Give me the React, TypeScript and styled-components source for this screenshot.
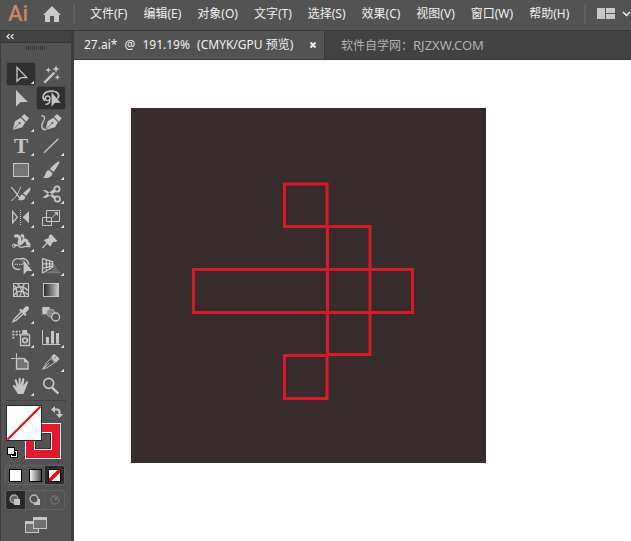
import React from "react";
import styled, { createGlobalStyle } from "styled-components";

const GlobalStyle = createGlobalStyle`
  * { box-sizing: border-box; }
  body { margin: 0; background: #fff; }
  button { font: inherit; color: inherit; margin: 0; padding: 0; border: 0; background: none; }
  svg { display: block; }
`;

const ink = "#c6c6c6";

const Shell = styled.div`
  display: flex;
  flex-direction: column;
  height: 100vh;
  overflow: hidden;
  color: #f0f0f0;
  font: 12px/18px "Noto Sans", "Noto Sans CJK SC", sans-serif;
`;

const MenuBar = styled.header`
  display: flex;
  align-items: center;
  flex: none;
  height: 31px;
  padding: 0 0 3px 8px;
  overflow: hidden;
  background: #535353;
  border-bottom: 1px solid #393939;
`;

const Logo = styled.span`
  width: 35px;
  flex: none;
  color: #c58761;
  font: 500 22px/26px Roboto, sans-serif;
`;

const HomeButton = styled.button`
  width: 18px;
  margin-right: 12px;
  flex: none;
`;

const Separator = styled.span`
  width: 2px;
  height: 20px;
  flex: none;
  background: #606060;
`;

const Menus = styled.nav`
  display: flex;
  gap: 16px;
  flex: none;
  margin: 0 15px;
`;

const MenuButton = styled.button`
  white-space: nowrap;
`;

const LayoutButton = styled.button`
  display: flex;
  align-items: center;
  gap: 7px;
  flex: none;
  margin-left: 11px;
`;

const Workspace = styled.div`
  display: flex;
  flex: 1;
  min-height: 0;
`;

const ToolPanel = styled.aside`
  display: flex;
  flex-direction: column;
  flex: none;
  width: 74px;
  background: #535353;
  border-left: 1px solid #3d3d3d;
  border-right: 3px solid #3d3d3d;
`;

const PanelHeader = styled.button`
  display: flex;
  align-items: center;
  height: 12px;
  padding-left: 5px;
  flex: none;
  background: #424242;
  border-bottom: 1px solid #383838;
`;

const Grip = styled.div`
  width: 20px;
  height: 4px;
  margin: 3px 0 13px 25px;
  flex: none;
  background: repeating-linear-gradient(90deg, #393939 0 1px, #535353 1px 2px);
`;

const ToolGrid = styled.div`
  display: grid;
  grid-template-columns: 28px 28px;
  grid-auto-rows: 22px;
  gap: 2px;
  padding: 0 6px 3px;
`;

const ToolButton = styled.button<{ $active?: boolean }>`
  border-radius: 2px;
  background: ${(p) => (p.$active ? "#303030" : "transparent")};
  box-shadow: ${(p) => (p.$active ? "0 0 0 1px #484848" : "none")};
`;

const Divider = styled.hr`
  width: 60px;
  height: 1px;
  margin: 0 0 4px 5px;
  border: 0;
  flex: none;
  background: #444;
`;

const Swatches = styled.div`
  position: relative;
  height: 54px;
  margin: 0 8px 6px 5px;
  flex: none;
`;

const SwatchButton = styled.button<{ $x: number; $y: number }>`
  position: absolute;
  left: ${(p) => p.$x}px;
  top: ${(p) => p.$y}px;
`;

const ModeRow = styled.div`
  display: flex;
  flex: none;
  width: 60px;
  height: 20px;
  margin: 0 0 5px 4px;
  border: 1px solid #616161;
  border-radius: 3px;
  overflow: hidden;
`;

const ModeButton = styled.button<{ $active?: boolean }>`
  display: grid;
  place-items: center;
  flex: 1;
  background: ${(p) => (p.$active ? "#292929" : "transparent")};
  & + & { border-left: 1px solid #5d5d5d; }
`;

const ScreenButton = styled.button`
  width: 23px;
  margin: 2px 0 0 24px;
`;

const Document = styled.main`
  display: flex;
  flex-direction: column;
  flex: 1;
  min-width: 0;
`;

const TabBar = styled.div`
  display: flex;
  flex: none;
  height: 29px;
  background: #424242;
  border-bottom: 1px solid #383838;
`;

const Tab = styled.div`
  display: flex;
  align-items: center;
  flex: none;
  width: 251px;
  padding: 0 6px 0 10px;
  justify-content: space-between;
  background: #535353;
  border-right: 1px solid #383838;
  white-space: nowrap;
`;

const TabPart = styled.span`
  margin-left: 4px;
`;

const CloseButton = styled.button`
  width: 9px;
`;

const TabNote = styled.span`
  align-self: center;
  margin-left: 16px;
  color: #b0b0b0;
  white-space: nowrap;
`;

const SiteName = styled.span`
  font-size: 13px;
`;

const Canvas = styled.section`
  flex: 1;
  padding: 48px 57px;
  overflow: hidden;
  background: #fff;
`;

const line = (w = 4) => ({ fill: "none", stroke: ink, strokeWidth: w });

type Tool = { name: string; art: React.ReactNode; active?: boolean; more?: boolean };

const nib = (
  <>
    <path d="M17 57 24 31 41 20 55 34 46 49Z" fill={ink} />
    <path d="M43 17 52 9 66 22 58 32Z" fill={ink} />
    <path d="M19 55 37 37" stroke="#535353" strokeWidth="2" />
    <circle cx="38" cy="36" r="3" fill="#535353" />
  </>
);

const tools: Tool[] = [
  { name: "选择", active: true, more: true, art: <path d="M30 13V55L42 44H59Z" {...line()} /> },
  {
    name: "魔棒",
    art: (
      <>
        <path d="M22 59 52 29" {...line(7)} />
        <path d="M57 7 60 15 68 18 60 21 57 30 54 21 46 18 54 15ZM34 12 36 18 43 21 36 24 34 30 32 24 25 21 32 18ZM61 34 63 40 69 43 63 46 61 52 59 46 53 43 59 40Z" fill={ink} />
      </>
    ),
  },
  { name: "直接选择", art: <path d="M27 9V59L41 45H63Z" fill={ink} /> },
  {
    name: "套索",
    active: true,
    art: (
      <>
        <path d="M24 41C15 34 17 20 29 15C41 10 59 12 64 21C66 26 65 31 61 35" {...line(5)} />
        <circle cx="32" cy="34" r="7" {...line(4)} />
        <path d="M38 37C40 46 35 52 25 52" {...line(4)} />
        <path d="M43 14V60L54 48H72Z" fill={ink} stroke="#303030" strokeWidth="1" />
      </>
    ),
  },
  { name: "钢笔", more: true, art: nib },
  {
    name: "曲率",
    art: (
      <>
        <g transform="translate(8 0)">{nib}</g>
        <path d="M13 15C24 12 25 23 19 31C13 41 11 54 26 57" {...line()} />
      </>
    ),
  },
  {
    name: "文字",
    more: true,
    art: (
      <text x="42" y="54" textAnchor="middle" fill={ink} fontFamily="Liberation Serif, serif" fontWeight="700" fontSize="64">T</text>
    ),
  },
  { name: "直线段", more: true, art: <path d="M21 53 64 11" {...line()} /> },
  { name: "矩形", more: true, art: <rect x="19.5" y="13.5" width="45" height="39" fill="#747474" stroke={ink} strokeWidth="3" /> },
  {
    name: "画笔",
    more: true,
    art: (
      <path d="M67 7C70 10 57 30 49 39L39 30C47 20 62 7 67 7ZM36 33 46 42C46 55 33 59 18 56C28 50 23 36 36 33Z" fill={ink} />
    ),
  },
  {
    name: "Shaper",
    more: true,
    art: (
      <>
        <path d="M12 13C18 14 30 35 43 51" {...line()} />
        <path d="M41 11C36 27 27 46 12 53" {...line(3)} />
        <path d="M70 12V22L57 39 48 31ZM45 34 55 41C54 51 45 54 33 50C41 47 38 37 45 34Z" fill={ink} />
      </>
    ),
  },
  {
    name: "剪刀",
    more: true,
    art: (
      <>
        <circle cx="60" cy="18" r="8" {...line(5)} />
        <circle cx="61" cy="48" r="8" {...line(5)} />
        <path d="M17 21 27 22 58 41 52 48ZM16 44 27 45 57 26 50 19Z" fill={ink} />
      </>
    ),
  },
  {
    name: "镜像",
    more: true,
    art: (
      <>
        <path d="M17 14V47L31 30.500Z" {...line(4)} />
        <path d="M40.500 9V54" {...line(3)} strokeDasharray="3 3" />
        <path d="M66 12V49L47 30.500Z" fill={ink} />
      </>
    ),
  },
  {
    name: "比例缩放",
    more: true,
    art: (
      <>
        <path d="M28.500 10.500H67.500V43.500H28.500ZM16.500 31.500H43.500V55.500H16.500ZM46 31 60 18" {...line(3)} />
        <path d="M51 15H63V27Z" fill={ink} />
      </>
    ),
  },
  {
    name: "变形",
    more: true,
    art: (
      <>
        <path d="M22 16C35 11 42 21 37 31C34 40 40 42 46 33C52 25 60 26 60 33C61 39 64 41 70 39" {...line(9)} />
        <path d="M21 44C30 37 34 48 42 49C53 50 57 41 70 48M47 14C51 17 51 22 48 27" {...line(4)} />
        <circle cx="21" cy="44" r="5" {...line(3)} />
        <circle cx="46" cy="14" r="5" fill={ink} />
      </>
    ),
  },
  {
    name: "操控变形",
    more: true,
    art: (
      <>
        <path d="M42 9 61 29 55 33 48 32 40 47 20 27 35 21 36 14Z" fill={ink} />
        <path d="M16 51 34 32" {...line()} />
      </>
    ),
  },
  {
    name: "形状生成器",
    more: true,
    art: (
      <>
        <path d="M40 42C29 47 16 39 16 27C16 15 28 8 38 12C50 7 65 15 65 29" {...line(4)} />
        <path d="M38 12C48 15 51 22 49 29" {...line(3)} strokeDasharray="3 3" />
        <path d="M22 28H50" {...line(4)} strokeDasharray="4 3" />
        <path d="M50 16V59L60 48H76Z" fill={ink} />
      </>
    ),
  },
  {
    name: "透视网格",
    more: true,
    art: (
      <>
        <path d="M49 25 72 55H26L49 42Z" fill="#777" />
        <path d="M16.500 10V55M17 11 47 20V37M17 54 47 37M17 26 47 27M17 40 47 33M28 14V49M38 17V43" {...line(4)} />
        <path d="M42 40H64M32 47H69" stroke="#535353" strokeWidth="2" />
      </>
    ),
  },
  {
    name: "网格",
    art: (
      <>
        <rect x="19.500" y="13.500" width="45" height="39" {...line(3)} />
        <path d="M19 35C32 18 49 21 65 35M19 52C29 35 43 31 65 48M31 14C45 25 46 40 38 52M52 14C42 27 49 41 54 52M19 22C31 17 28 44 31 52" {...line(4)} />
      </>
    ),
  },
  {
    name: "渐变",
    art: (
      <>
        <defs>
          <linearGradient id="toolGradient"><stop stopColor="#222" /><stop offset="1" stopColor="#ccc" /></linearGradient>
        </defs>
        <rect x="19.500" y="13.500" width="45" height="39" fill="url(#toolGradient)" stroke={ink} strokeWidth="3" />
      </>
    ),
  },
  {
    name: "吸管",
    more: true,
    art: (
      <>
        <path d="M42 27 22 48 18 56 27 52 48 33" {...line(4)} />
        <path d="M36 21 41 17 46 21 54 12C62 6 70 14 64 22L55 30 59 35 54 39Z" fill={ink} />
      </>
    ),
  },
  {
    name: "混合",
    art: (
      <>
        <rect x="16" y="12" width="22" height="22" fill={ink} />
        <circle cx="42" cy="31" r="12" fill="#858585" stroke="#a0a0a0" strokeWidth="3" />
        <circle cx="56" cy="42" r="12" fill="#535353" stroke={ink} strokeWidth="4" />
      </>
    ),
  },
  {
    name: "符号喷枪",
    more: true,
    art: (
      <>
        <path d="M42 23.500H67.500V55.500H40.500V23.500Z" {...line(4)} />
        <path d="M46 9H60V18H64V22H44V18H46Z" fill={ink} />
        <circle cx="54" cy="40" r="7" {...line(5)} />
        <path d="M16 14H40M16 23H40M16 32H22" {...line(5)} strokeDasharray="6 4" />
      </>
    ),
  },
  {
    name: "柱形图",
    more: true,
    art: (
      <>
        <path d="M16.500 9V52.500H70" {...line(3)} />
        <path d="M27 30H36V50H27ZM42 12H51V50H42ZM57 18H66V50H57Z" fill={ink} />
      </>
    ),
  },
  {
    name: "画板",
    art: (
      <>
        <path d="M12 22.500H26M28.500 7V20" {...line(3)} />
        <path d="M28.500 22.500H52L63 33V54H28.500Z" fill="#747474" stroke={ink} strokeWidth="4" />
        <path d="M51 22V34H63Z" fill={ink} />
      </>
    ),
  },
  {
    name: "切片",
    more: true,
    art: (
      <>
        <path d="M17 55 29 35 42 22 54 34C44 41 35 49 17 55ZM18 54 36 37" {...line(3)} />
        <path d="M42 18 51 8 68 23 57 35Z" fill={ink} />
        <circle cx="54" cy="20" r="2" fill="#535353" />
      </>
    ),
  },
  {
    name: "抓手",
    more: true,
    art: (
      <path d="M31 54C27 45 19 38 17 32C19 28 24 30 29 36L23 16C24 11 29 12 30 17L35 30V11C37 7 41 8 41 12V29L46 11C49 8 53 10 52 14L49 32 58 20C62 17 65 21 62 25L54 46 49 57H33Z" fill={ink} />
    ),
  },
  {
    name: "缩放",
    art: (
      <>
        <circle cx="35" cy="25" r="15" {...line(5)} />
        <path d="M45 37 64 56" {...line(7)} />
      </>
    ),
  },
];

const menus = ["文件(F)", "编辑(E)", "对象(O)", "文字(T)", "选择(S)", "效果(C)", "视图(V)", "窗口(W)", "帮助(H)"];

const Artwork = () => (
  <svg width="355" height="355" viewBox="0 0 355 355" role="img" aria-label="画板">
    <rect width="355" height="355" fill="#362c2b" />
    <g fill="none" stroke="#dc1727" strokeWidth="3">
      <rect x="153.500" y="76" width="42.500" height="42.500" />
      <path d="M196 118.500H239V246.500H196.500V118.500" />
      <rect x="62.500" y="161.500" width="219" height="43" />
      <rect x="153.500" y="247.500" width="42.500" height="43" />
    </g>
  </svg>
);

export default function App() {
  return (
    <Shell>
      <GlobalStyle />
      <MenuBar>
        <Logo>Ai</Logo>
        <HomeButton aria-label="主页">
          <svg width="18" height="16" viewBox="0 0 18 16"><path d="M9 0 18 9H16V16H11V10H7V16H2V9H0Z" fill="#cbcbcb" /></svg>
        </HomeButton>
        <Separator />
        <Menus>{menus.map((m) => <MenuButton key={m}>{m}</MenuButton>)}</Menus>
        <Separator />
        <LayoutButton aria-label="排列文档">
          <svg width="18" height="11" viewBox="0 0 18 11"><path d="M0 0H8V11H0ZM9 0H18V5H9ZM9 6H18V11H9Z" fill="#c8c8c8" /></svg>
          <svg width="9" height="6" viewBox="0 0 9 6"><path d="M1 1 4.500 4.500 8 1" fill="none" stroke="#eee" strokeWidth="1.500" /></svg>
        </LayoutButton>
      </MenuBar>
      <Workspace>
        <ToolPanel>
          <PanelHeader aria-label="折叠面板">
            <svg width="8" height="5" viewBox="0 0 8 5"><path d="M3.500 0 1 2.500 3.500 5M7.500 0 5 2.500 7.500 5" fill="none" stroke="#ddd" strokeWidth="1.300" /></svg>
          </PanelHeader>
          <Grip />
          <ToolGrid>
            {tools.map((t) => (
              <ToolButton key={t.name} $active={t.active} aria-label={t.name}>
                <svg width="28" height="22" viewBox="0 0 84 66">
                  {t.art}
                  {t.more && <path d="M81 53V63H71Z" fill="#ddd" />}
                </svg>
              </ToolButton>
            ))}
          </ToolGrid>
          <Divider />
          <Swatches>
            <SwatchButton $x={19} $y={18} aria-label="描边">
              <svg width="36" height="36" viewBox="0 0 36 36">
                <rect width="36" height="36" fill="#fff" />
                <rect x="1" y="1" width="34" height="34" fill="#e8172b" />
                <rect x="9.500" y="9.500" width="17" height="17" fill="#535353" stroke="#fff" />
                <rect x="10.500" y="10.500" width="15" height="15" fill="none" stroke="#333" />
              </svg>
            </SwatchButton>
            <SwatchButton $x={0} $y={0} aria-label="填色">
              <svg width="36" height="36" viewBox="0 0 36 36">
                <rect x="0.500" y="0.500" width="35" height="35" fill="#fff" stroke="#292929" />
                <path d="M1.500 34.500 34.500 1.500" stroke="#f00" strokeWidth="2" />
              </svg>
            </SwatchButton>
            <SwatchButton $x={45} $y={1} aria-label="互换填色和描边">
              <svg width="12" height="12" viewBox="0 0 12 12">
                <path d="M3 3.500H6C8 3.500 8.500 4.500 8.500 6V9" fill="none" stroke={ink} strokeWidth="2" />
                <path d="M4 0V7L0 3.500ZM5 8H12L8.500 12Z" fill={ink} />
              </svg>
            </SwatchButton>
            <SwatchButton $x={1} $y={42} aria-label="默认填色和描边">
              <svg width="11" height="11" viewBox="0 0 11 11" shapeRendering="crispEdges">
                <rect x="3" y="3" width="8" height="8" fill="#000" />
                <rect x="4.500" y="4.500" width="5" height="5" fill="none" stroke="#fff" />
                <rect x="0" y="0" width="8" height="8" fill="#000" />
                <rect x="1" y="1" width="6" height="6" fill="#fff" />
              </svg>
            </SwatchButton>
          </Swatches>
          <ModeRow>
            <ModeButton aria-label="颜色">
              <svg width="13" height="13" viewBox="0 0 13 13"><rect x="0.500" y="0.500" width="12" height="12" fill="#fff" stroke="#000" /></svg>
            </ModeButton>
            <ModeButton aria-label="渐变填色">
              <svg width="13" height="13" viewBox="0 0 13 13">
                <defs><linearGradient id="modeGradient"><stop stopColor="#fff" /><stop offset="1" stopColor="#444" /></linearGradient></defs>
                <rect x="0.500" y="0.500" width="12" height="12" fill="url(#modeGradient)" stroke="#000" />
              </svg>
            </ModeButton>
            <ModeButton $active aria-label="无">
              <svg width="13" height="13" viewBox="0 0 13 13">
                <rect x="0.500" y="0.500" width="12" height="12" fill="#fff" stroke="#000" />
                <path d="M1 9.500 9.500 1H12V3.500L3.500 12H1Z" fill="#f00" />
              </svg>
            </ModeButton>
          </ModeRow>
          <ModeRow>
            <ModeButton $active aria-label="正常绘图">
              <svg width="12" height="12" viewBox="0 0 12 12"><circle cx="5" cy="5" r="4" fill="#666" stroke="#aaa" strokeWidth="1.300" /><rect x="5" y="5" width="6" height="6" fill={ink} /></svg>
            </ModeButton>
            <ModeButton aria-label="背面绘图">
              <svg width="12" height="12" viewBox="0 0 12 12"><rect x="5" y="5" width="6" height="6" fill={ink} /><circle cx="5" cy="5" r="4" fill="#535353" stroke="#bbb" strokeWidth="1.300" /></svg>
            </ModeButton>
            <ModeButton aria-label="内部绘图">
              <svg width="12" height="12" viewBox="0 0 12 12"><circle cx="6" cy="6" r="4" fill="none" stroke="#747474" strokeWidth="1.300" /><path d="M6 4H8V6H6Z" fill="#858585" /></svg>
            </ModeButton>
          </ModeRow>
          <ScreenButton aria-label="更改屏幕模式">
            <svg width="23" height="16" viewBox="0 0 23 16">
              <rect x="0.500" y="4.500" width="13" height="11" fill="#707070" stroke={ink} />
              <path d="M0 4H14V7H0Z" fill={ink} />
              <rect x="8.500" y="0.500" width="13" height="11" fill="#707070" stroke={ink} />
              <path d="M8 0H22V3H8Z" fill={ink} />
            </svg>
          </ScreenButton>
        </ToolPanel>
        <Document>
          <TabBar>
            <Tab>
              <span>
                27.ai* <TabPart>@ </TabPart><TabPart>191.19% </TabPart><TabPart>(CMYK/GPU 预览)</TabPart>
              </span>
              <CloseButton aria-label="关闭">
                <svg width="8" height="8" viewBox="0 0 8 8"><path d="M1.500 1.500 6.500 6.500M6.500 1.500 1.500 6.500" stroke="#eee" strokeWidth="2" /></svg>
              </CloseButton>
            </Tab>
            <TabNote>软件自学网：<SiteName>RJZXW.COM</SiteName></TabNote>
          </TabBar>
          <Canvas><Artwork /></Canvas>
        </Document>
      </Workspace>
    </Shell>
  );
}
